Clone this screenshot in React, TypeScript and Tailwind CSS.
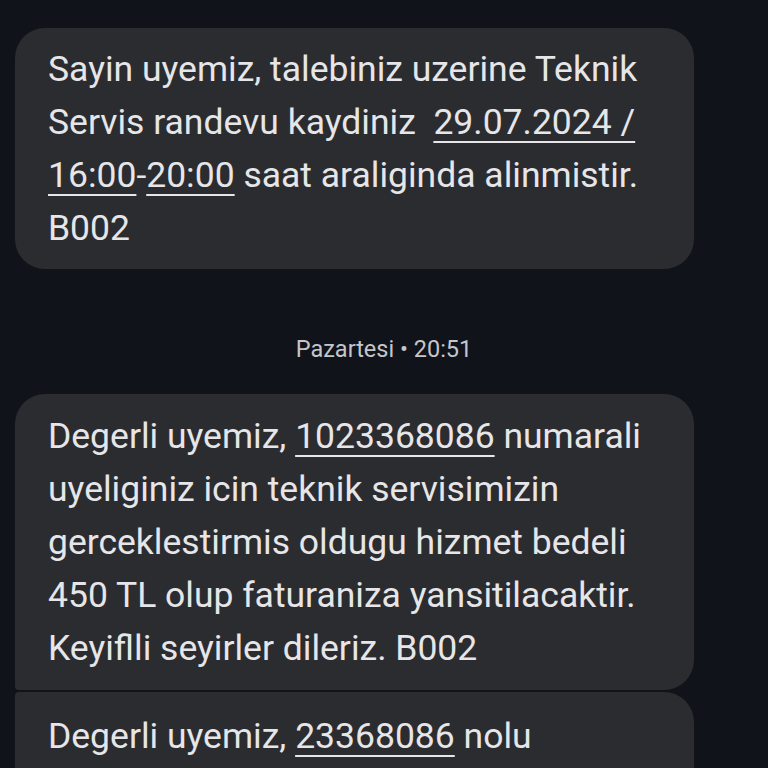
const BUBBLE = 'ml-[15px] w-[679px] bg-[#2b2c30] pl-[33px] pr-4 text-[35.5px] leading-[53px] text-[#e6e6e9]';
const LINK = 'underline decoration-2 underline-offset-[7px]';

export default function App() {
  return (
    <div
      className="w-[768px] h-[768px] overflow-hidden bg-[#10131a] pt-[28px] flex flex-col"
      style={{ fontFamily: 'Roboto, "Noto Sans", sans-serif' }}
    >
      <div className={`${BUBBLE} rounded-[30px] pt-[15px] pb-[14px]`}>
        Sayin uyemiz, talebiniz uzerine Teknik
        <br />
        Servis randevu kaydiniz&nbsp; <span className={LINK}>29.07.2024 /</span>
        <br />
        <span className={LINK}>16:00</span>-<span className={LINK}>20:00</span> saat araliginda alinmistir.
        <br />
        B002
      </div>

      <div className="pt-[66px] pb-[31px] flex justify-center">
        <span className="text-[23.5px] leading-[28px] text-[#c4c6cc]">Pazartesi • 20:51</span>
      </div>

      <div className={`${BUBBLE} rounded-t-[30px] rounded-br-[30px] rounded-bl-[4px] pt-[16px] pb-[15px]`}>
        Degerli uyemiz, <span className={LINK}>1023368086</span> numarali
        <br />
        uyeliginiz icin teknik servisimizin
        <br />
        gerceklestirmis oldugu hizmet bedeli
        <br />
        450 TL olup faturaniza yansitilacaktir.
        <br />
        Keyiflli seyirler dileriz. B002
      </div>

      <div className={`${BUBBLE} mt-[2px] rounded-tl-[4px] rounded-tr-[30px] pt-[18px] pb-[40px]`}>
        Degerli uyemiz, <span className={LINK}>23368086</span> nolu
      </div>
    </div>
  );
}
